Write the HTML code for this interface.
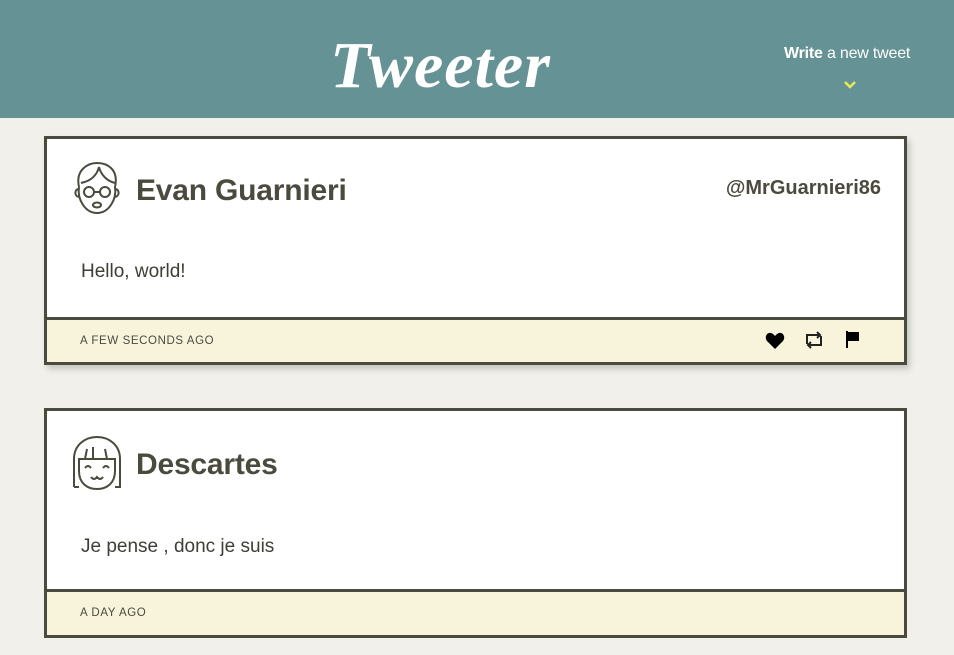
<!DOCTYPE html>
<html><head><meta charset="utf-8"><style>
*{margin:0;padding:0;box-sizing:border-box}
body{width:954px;height:655px;overflow:hidden;background:#f1f0ea;font-family:"Liberation Sans",sans-serif;color:#4a4a3e;position:relative}
.hdr{position:absolute;left:0;top:0;width:954px;height:118px;background:#659294}
.logo{position:absolute;left:328px;top:26px;width:225px;text-align:center;font-family:"Liberation Serif",serif;font-style:italic;font-weight:bold;font-size:66px;color:#fff;letter-spacing:1px;line-height:80px}
.write{position:absolute;left:784px;top:45px;font-size:16px;color:#fff;letter-spacing:-0.2px}
.chev{position:absolute;left:843px;top:80px}
.card{position:absolute;left:44px;width:863px;border:3px solid #4a4a3e;background:#fff}
.c1{top:136px;height:229px;box-shadow:3px 4px 6px rgba(0,0,0,.18)}
.c2{top:408px;height:230px}
.name{position:absolute;left:89px;font-weight:bold;font-size:30px;letter-spacing:-0.2px}
.handle{position:absolute;right:23px;top:38px;font-weight:bold;font-size:20px}
.msg{position:absolute;left:34px;font-size:19px;color:#3e3e36}
.foot{position:absolute;left:0;right:0;bottom:0;height:45px;background:#f8f4dc;border-top:3px solid #4a4a3e}
.time{position:absolute;left:33px;top:15px;font-size:11.5px;letter-spacing:0.6px;color:#4a4a3e}
.av{position:absolute;left:24px}
</style></head><body>
<div class="hdr">
<div class="logo">Tweeter</div>
<div class="write"><b>Write</b> a new tweet</div>
<svg class="chev" width="14" height="10" viewBox="0 0 14 10"><path d="M2 2 L7 7 L12 2" stroke="#e6ea5c" stroke-width="2.5" fill="none"/></svg>
</div>

<div class="card c1">
<svg class="av" style="top:22px" width="52" height="56" viewBox="0 0 52 56" fill="none" stroke="#4a4a3e" stroke-width="2">
<path d="M8 26 C4 8 18 2 26 2 C36 2 48 8 44 26"/>
<path d="M10 22 C20 20 26 14 28 6 M28 6 C30 14 36 20 44 22"/>
<path d="M8 26 C6 38 14 52 26 52 C38 52 46 38 44 26"/>
<path d="M8 28 C3 28 3 36 9 36 M44 28 C49 28 49 36 43 36"/>
<circle cx="18" cy="31" r="5"/><circle cx="34" cy="31" r="5"/><path d="M23 31 H29"/>
<ellipse cx="26" cy="44" rx="4" ry="2.5"/>
</svg>
<div class="name" style="top:35px">Evan Guarnieri</div>
<div class="handle">@MrGuarnieri86</div>
<div class="msg" style="top:122px">Hello, world!</div>
<div class="foot"><div class="time">A FEW SECONDS AGO</div>
<svg style="position:absolute;left:718px;top:12px" width="20" height="18" viewBox="0 0 20 18"><path d="M10 17 L2 9 C-1 5 2 0 6 1 C8 1.5 9 3 10 4 C11 3 12 1.5 14 1 C18 0 21 5 18 9 Z" fill="#000"/></svg>
<svg style="position:absolute;left:757px;top:11px" width="20" height="18" viewBox="0 0 20 18" fill="none" stroke="#222" stroke-width="2"><path d="M3 13 V4 H16 M13 1 L16 4 L13 7"/><path d="M17 5 V14 H4 M7 17 L4 14 L7 11"/></svg>
<svg style="position:absolute;left:798px;top:10px" width="16" height="19" viewBox="0 0 16 19"><path d="M2 1 V18" stroke="#000" stroke-width="2"/><path d="M3 2 H14 V11 H3 Z" fill="#000"/></svg>
</div>
</div>

<div class="card c2">
<svg class="av" style="top:24px" width="52" height="56" viewBox="0 0 52 56" fill="none" stroke="#4a4a3e" stroke-width="2">
<path d="M3 52 V24 C3 10 14 2 26 2 C38 2 49 10 49 24 V52 H44"/>
<path d="M3 52 H8"/>
<path d="M8 24 V36 C8 48 16 54 26 54 C36 54 44 48 44 36 V24 Z"/>
<path d="M14 24 L16 14 M22 24 V12 M36 24 L34 14"/>
<path d="M14 33 Q17 29 20 33 M32 33 Q35 29 38 33"/>
<path d="M20 42 Q23 46 26 42 Q29 46 32 42"/>
</svg>
<div class="name" style="top:37px">Descartes</div>
<div class="msg" style="top:125px">Je pense , donc je suis</div>
<div class="foot" style="height:46px"><div class="time">A DAY AGO</div></div>
</div>
</body></html>
